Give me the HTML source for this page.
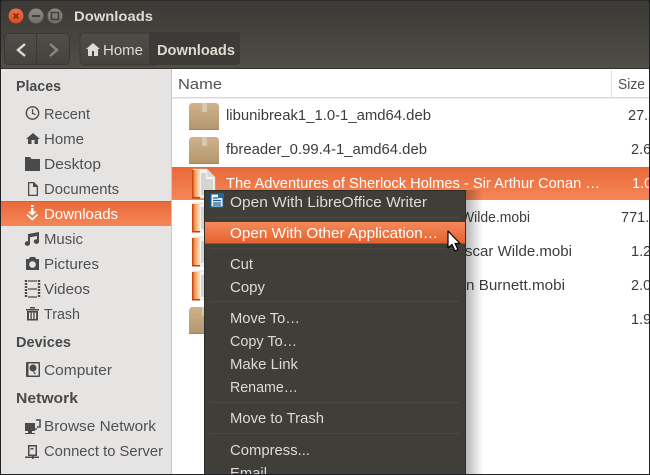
<!DOCTYPE html>
<html><head><meta charset="utf-8"><style>
html,body{margin:0;padding:0;background:#000;width:650px;height:475px;overflow:hidden}
svg{display:block}
text{font-family:"Liberation Sans",sans-serif;font-size:14.5px;white-space:pre}
.s{fill:#4f5054}.f{fill:#3c3c3c}.h{fill:#4a4a4a;font-weight:bold}.m{fill:#dfdbd2}
</style></head><body>
<svg width="650" height="475" viewBox="0 0 650 475" xmlns="http://www.w3.org/2000/svg">
<defs>
<linearGradient id="bar" x1="0" y1="0" x2="0" y2="1"><stop offset="0" stop-color="#3b3a36"/><stop offset=".45" stop-color="#44423d"/><stop offset="1" stop-color="#524f49"/></linearGradient>
<linearGradient id="sel" x1="0" y1="0" x2="0" y2="1"><stop offset="0" stop-color="#e8693a"/><stop offset="1" stop-color="#f58656"/></linearGradient>
<linearGradient id="hi" x1="0" y1="0" x2="0" y2="1"><stop offset="0" stop-color="#f5895a"/><stop offset="1" stop-color="#e4622f"/></linearGradient>
<linearGradient id="box" x1="0" y1="0" x2="0" y2="1"><stop offset="0" stop-color="#cdb38d"/><stop offset="1" stop-color="#b4966d"/></linearGradient>
<linearGradient id="shad" x1="0" y1="0" x2="1" y2="0"><stop offset="0" stop-color="#000" stop-opacity=".3"/><stop offset="1" stop-color="#000" stop-opacity="0"/></linearGradient>
<linearGradient id="btn" x1="0" y1="0" x2="0" y2="1"><stop offset="0" stop-color="#4f4d47"/><stop offset="1" stop-color="#45433e"/></linearGradient>
<linearGradient id="spine" x1="0" y1="0" x2="1" y2="0"><stop offset="0" stop-color="#e0672a"/><stop offset=".5" stop-color="#f3ad6c"/><stop offset="1" stop-color="#f8e3c8"/></linearGradient>
<linearGradient id="wb" x1="0" y1="0" x2="0" y2="1"><stop offset="0" stop-color="#8d8b83"/><stop offset="1" stop-color="#6f6d66"/></linearGradient>
<linearGradient id="cl" x1="0" y1="0" x2="0" y2="1"><stop offset="0" stop-color="#f0704a"/><stop offset="1" stop-color="#d94a1e"/></linearGradient>
<g id="pkg">
<path d="M3 0H27Q29 0 30 3V26Q30 27 29 27H1Q0 27 0 26V3Q1 0 3 0Z" fill="url(#box)"/>
<rect x="0" y="8" width="30" height="1" fill="#bfa47d" opacity=".6"/>
<rect x="13" y="0" width="5" height="9" fill="#d9c7a9"/>
<rect x="0" y="26" width="30" height="1" fill="#9d8664"/>
</g>
<g id="doc">
<path d="M1 0H15L23 8V29H1Z" fill="#f4f3f0" stroke="#c8c6c0" stroke-width=".6"/>
<path d="M15 0L23 8H15Z" fill="#dcdad4"/>
<path d="M0 1H8V29H0Z" fill="url(#spine)"/>
<rect x="0" y="1" width="1.500" height="28" fill="#cc4a16"/>
<rect x="0" y="28" width="8" height="1.500" fill="#c23f10"/>
<path d="M9 5h5M9 7h5M9 9h5M9 11h12M9 13h12M9 15h12M9 17h12M9 19h12M9 21h12M9 23h12M9 25h12" stroke="#b5b4af" stroke-width="1"/>
</g>
<clipPath id="win"><path d="M5 0H645Q649 0 649 4V474H1V4Q1 0 5 0Z"/></clipPath>
</defs>

<rect width="650" height="475" fill="#222"/>
<g clip-path="url(#win)">
<rect x="0" y="0" width="650" height="69" fill="url(#bar)"/>
<rect x="0" y="0" width="650" height="1" fill="#2b2a27"/>
<rect x="0" y="68" width="650" height="1" fill="#33322e"/>

<circle cx="16" cy="16" r="7.500" fill="url(#cl)"/>
<path d="M13.500 13.500l5 5M18.500 13.500l-5 5" stroke="#6b2610" stroke-width="1.500"/>
<circle cx="36" cy="16" r="7.500" fill="url(#wb)"/>
<rect x="32" y="15" width="8" height="2" fill="#3f3e3a"/>
<circle cx="55" cy="16" r="7.500" fill="url(#wb)"/>
<rect x="51.500" y="12.500" width="7" height="7" fill="none" stroke="#3f3e3a" stroke-width="1.500"/>
<text x="74" y="21" font-weight="bold" fill="#dfdbd2" style="font-size:14px" textLength="79" lengthAdjust="spacingAndGlyphs">Downloads</text>

<rect x="4.500" y="33.500" width="65" height="31" rx="4" fill="url(#btn)" stroke="#393834"/>
<rect x="36" y="34" width="1" height="30" fill="#393834"/>
<path d="M25 44l-7 6 7 6" fill="none" stroke="#dfdbd2" stroke-width="2.400"/>
<path d="M50 44l7 6-7 6" fill="none" stroke="#8a8880" stroke-width="2.400"/>

<rect x="80" y="33" width="80" height="32" rx="4" fill="url(#btn)" stroke="#393834"/>
<path d="M153 32H236Q240 32 240 36V61Q240 65 236 65H149V32Z" fill="#3c3b37"/>
<path d="M93 43l-7 6h2v7h4v-5h2v5h4v-7h2Z" fill="#dfdbd2"/>
<text x="103" y="55" fill="#dfdbd2" textLength="40" lengthAdjust="spacingAndGlyphs">Home</text>
<text x="157" y="55" font-weight="bold" fill="#dfdbd2" textLength="78" lengthAdjust="spacingAndGlyphs">Downloads</text>

<!-- sidebar -->
<rect x="1" y="69" width="170" height="405" fill="#e6e4e2"/>
<rect x="171" y="69" width="1" height="405" fill="#c9c7c4"/>
<rect x="172" y="69" width="478" height="405" fill="#fff"/>
<text x="16" y="91" class="h" textLength="45" lengthAdjust="spacingAndGlyphs">Places</text>
<text x="16" y="347" class="h" textLength="55" lengthAdjust="spacingAndGlyphs">Devices</text>
<text x="16" y="403" class="h" textLength="62" lengthAdjust="spacingAndGlyphs">Network</text>

<rect x="1" y="201" width="170" height="25" fill="url(#sel)"/>
<rect x="1" y="201" width="170" height="1" fill="#d9602f"/>

<text x="44" y="119" class="s" textLength="46" lengthAdjust="spacingAndGlyphs">Recent</text>
<text x="44" y="144" class="s" textLength="40" lengthAdjust="spacingAndGlyphs">Home</text>
<text x="44" y="169" class="s" textLength="57" lengthAdjust="spacingAndGlyphs">Desktop</text>
<text x="44" y="194" class="s" textLength="75" lengthAdjust="spacingAndGlyphs">Documents</text>
<text x="44" y="219" fill="#fff" textLength="74" lengthAdjust="spacingAndGlyphs">Downloads</text>
<text x="44" y="244" class="s" textLength="39" lengthAdjust="spacingAndGlyphs">Music</text>
<text x="44" y="269" class="s" textLength="55" lengthAdjust="spacingAndGlyphs">Pictures</text>
<text x="44" y="294" class="s" textLength="46" lengthAdjust="spacingAndGlyphs">Videos</text>
<text x="44" y="319" class="s" textLength="36" lengthAdjust="spacingAndGlyphs">Trash</text>
<text x="44" y="375" class="s" textLength="68" lengthAdjust="spacingAndGlyphs">Computer</text>
<text x="44" y="431" class="s" textLength="112" lengthAdjust="spacingAndGlyphs">Browse Network</text>
<text x="44" y="456" class="s" textLength="119" lengthAdjust="spacingAndGlyphs">Connect to Server</text>

<!-- sidebar icons -->
<g fill="#4a4a4a">
<circle cx="32.500" cy="113" r="6.200" fill="none" stroke="#4a4a4a" stroke-width="1.400"/>
<path d="M32.500 109v4.500l3 1" fill="none" stroke="#4a4a4a" stroke-width="1.200"/>
<path d="M33 133l-7 6h2v5h3.500v-4h3v4H38v-5h2Z"/>
<path d="M25 157h5l1.500 2H40v12H25Z"/>
<path d="M28 182H34L38 186V196H28Zm1.300 1.300V194.700H36.700V187H33V183.300Z" fill-rule="evenodd"/>
<path d="M31 205h2.500v2H31ZM31 208h2.500v3.500h3l-2 2-2.250 2-2.250-2-2-2h3Z" fill="#fff"/>
<path d="M27 214.500l5.250 5 5.250-5" fill="none" stroke="#fff" stroke-width="1.600"/>
<path d="M28 234l11-2v9.500a2.600 2.300 0 1 1-2-2.200V236l-7 1.300v6.200a2.600 2.300 0 1 1-2-2.200Z"/>
<path d="M26 259h3l1-2h5l1 2h3v11H26Zm6.500 2.200a3.300 3.300 0 1 0 .01 0Z" fill-rule="evenodd"/>
<path d="M26 280v18M39 280v18" stroke="#4a4a4a" stroke-width="2.400" stroke-dasharray="2 1"/>
<path d="M28 281h9M28 289h9M28 297h9" stroke="#4a4a4a" stroke-width="1.200"/>
<path d="M26 309h13v1.500H26ZM30 307h5v1.500h-5ZM27 311h11v9.500H27Zm2 1.500v6.500h1.500v-6.500Zm2.800 0v6.500h1.500v-6.500Zm2.800 0v6.500h1.500v-6.500Z" fill-rule="evenodd"/>
<path d="M27 362H39Q40 362 40 363V376Q40 377 39 377H27Q26 377 26 376V363Q26 362 27 362Zm1.500 1.500V375.500H38.500V363.500Z" fill-rule="evenodd"/>
<circle cx="33" cy="368" r="3.500"/><path d="M33 370l3 4h-2Z"/>
<path d="M25 423H35V431H32V433H35V434H25V433H28V431H25Z"/>
<path d="M36 420h4v7h-3M37 429h-3" fill="none" stroke="#4a4a4a" stroke-width="1.500"/>
<path d="M28 445H37V456H28Zm1.500 1.500V454.500H35.500V446.500Z" fill-rule="evenodd"/>
<rect x="30.500" y="448" width="3" height="1.500"/>
<rect x="32" y="456" width="1.500" height="3"/>
<rect x="25" y="456.500" width="14" height="1.500"/>
</g>

<!-- header -->
<rect x="172" y="69" width="478" height="28" fill="#fff"/>
<rect x="172" y="97" width="478" height="1.500" fill="#dcdad7"/>
<rect x="611" y="70" width="1" height="27" fill="#e2e0de"/>
<text x="178" y="89" class="s" textLength="44" lengthAdjust="spacingAndGlyphs">Name</text>
<text x="618" y="89" class="s" textLength="27" lengthAdjust="spacingAndGlyphs">Size</text>

<!-- files -->
<rect x="172" y="167" width="478" height="33" fill="url(#sel)"/>
<use href="#pkg" x="189" y="103"/>
<use href="#pkg" x="189" y="137"/>
<use href="#doc" x="192" y="169"/>
<use href="#doc" x="192" y="203"/>
<use href="#doc" x="192" y="237"/>
<use href="#doc" x="192" y="271"/>
<use href="#pkg" x="189" y="307"/>
<text x="226" y="120" class="f" textLength="205" lengthAdjust="spacingAndGlyphs">libunibreak1_1.0-1_amd64.deb</text>
<text x="226" y="154" class="f" textLength="201" lengthAdjust="spacingAndGlyphs">fbreader_0.99.4-1_amd64.deb</text>
<text x="226" y="188" fill="#fff" textLength="374" lengthAdjust="spacingAndGlyphs">The Adventures of Sherlock Holmes - Sir Arthur Conan …</text>
<text x="461" y="222" class="f" textLength="69" lengthAdjust="spacingAndGlyphs">Wilde.mobi</text>
<text x="465" y="256" class="f" textLength="107" lengthAdjust="spacingAndGlyphs">scar Wilde.mobi</text>
<text x="466" y="290" class="f" textLength="99" lengthAdjust="spacingAndGlyphs">n Burnett.mobi</text>
<text x="628" y="120" class="f">27.2 kB</text>
<text x="631" y="154" class="f">2.6 MB</text>
<text x="632" y="188" fill="#fff">1.0 MB</text>
<text x="621" y="222" class="f">771.0 kB</text>
<text x="631" y="256" class="f">1.2 MB</text>
<text x="631" y="290" class="f">2.0 MB</text>
<text x="631" y="324" class="f">1.9 MB</text>

<!-- menu -->
<rect x="465" y="190" width="18" height="285" fill="url(#shad)"/>
<rect x="204" y="190" width="261.500" height="285" fill="#3f3e39"/>
<rect x="204" y="190" width="261.500" height="1" fill="#2f2e2a"/>
<rect x="204" y="190" width="1" height="285" fill="#2f2e2a"/>
<rect x="465" y="190" width="1" height="285" fill="#2f2e2a"/>
<g fill="#4a4943">
<rect x="210" y="217" width="250" height="1"/>
<rect x="210" y="248" width="250" height="1"/>
<rect x="210" y="301" width="250" height="1"/>
<rect x="210" y="402" width="250" height="1"/>
<rect x="210" y="433" width="250" height="1"/>
</g>
<rect x="205" y="222" width="260" height="21.500" fill="url(#hi)"/>

<path d="M210 193H219L224 198V208H210Z" fill="#0e5a96"/>
<path d="M211.500 194.500H218.500L222.500 198.500V206.500H211.500Z" fill="#f5f5f5"/>
<path d="M218 193h6v5h-6Z" fill="#1a6aa8"/>
<path d="M213 198h5M213 200.500h8M213 203h8M213 205h8" stroke="#1a5f9e" stroke-width="1.200"/>

<text x="230" y="207" class="m" textLength="197" lengthAdjust="spacingAndGlyphs">Open With LibreOffice Writer</text>
<text x="230" y="238" fill="#fff" textLength="208" lengthAdjust="spacingAndGlyphs">Open With Other Application…</text>
<text x="230" y="269" class="m" textLength="23" lengthAdjust="spacingAndGlyphs">Cut</text>
<text x="230" y="292" class="m" textLength="35" lengthAdjust="spacingAndGlyphs">Copy</text>
<text x="230" y="323" class="m" textLength="70" lengthAdjust="spacingAndGlyphs">Move To…</text>
<text x="230" y="346" class="m" textLength="67" lengthAdjust="spacingAndGlyphs">Copy To…</text>
<text x="230" y="369" class="m" textLength="68" lengthAdjust="spacingAndGlyphs">Make Link</text>
<text x="230" y="392" class="m" textLength="68" lengthAdjust="spacingAndGlyphs">Rename…</text>
<text x="230" y="423" class="m" textLength="94" lengthAdjust="spacingAndGlyphs">Move to Trash</text>
<text x="230" y="455" class="m" textLength="80" lengthAdjust="spacingAndGlyphs">Compress...</text>
<text x="230" y="478" class="m" textLength="37" lengthAdjust="spacingAndGlyphs">Email</text>

<!-- cursor -->
<path d="M448 231V248L452 244.500L455 251L458 249.500L455 243.500H460Z" fill="#fff" stroke="#000" stroke-width="1.200" stroke-linejoin="round"/>
</g>
</svg>
</body></html>
